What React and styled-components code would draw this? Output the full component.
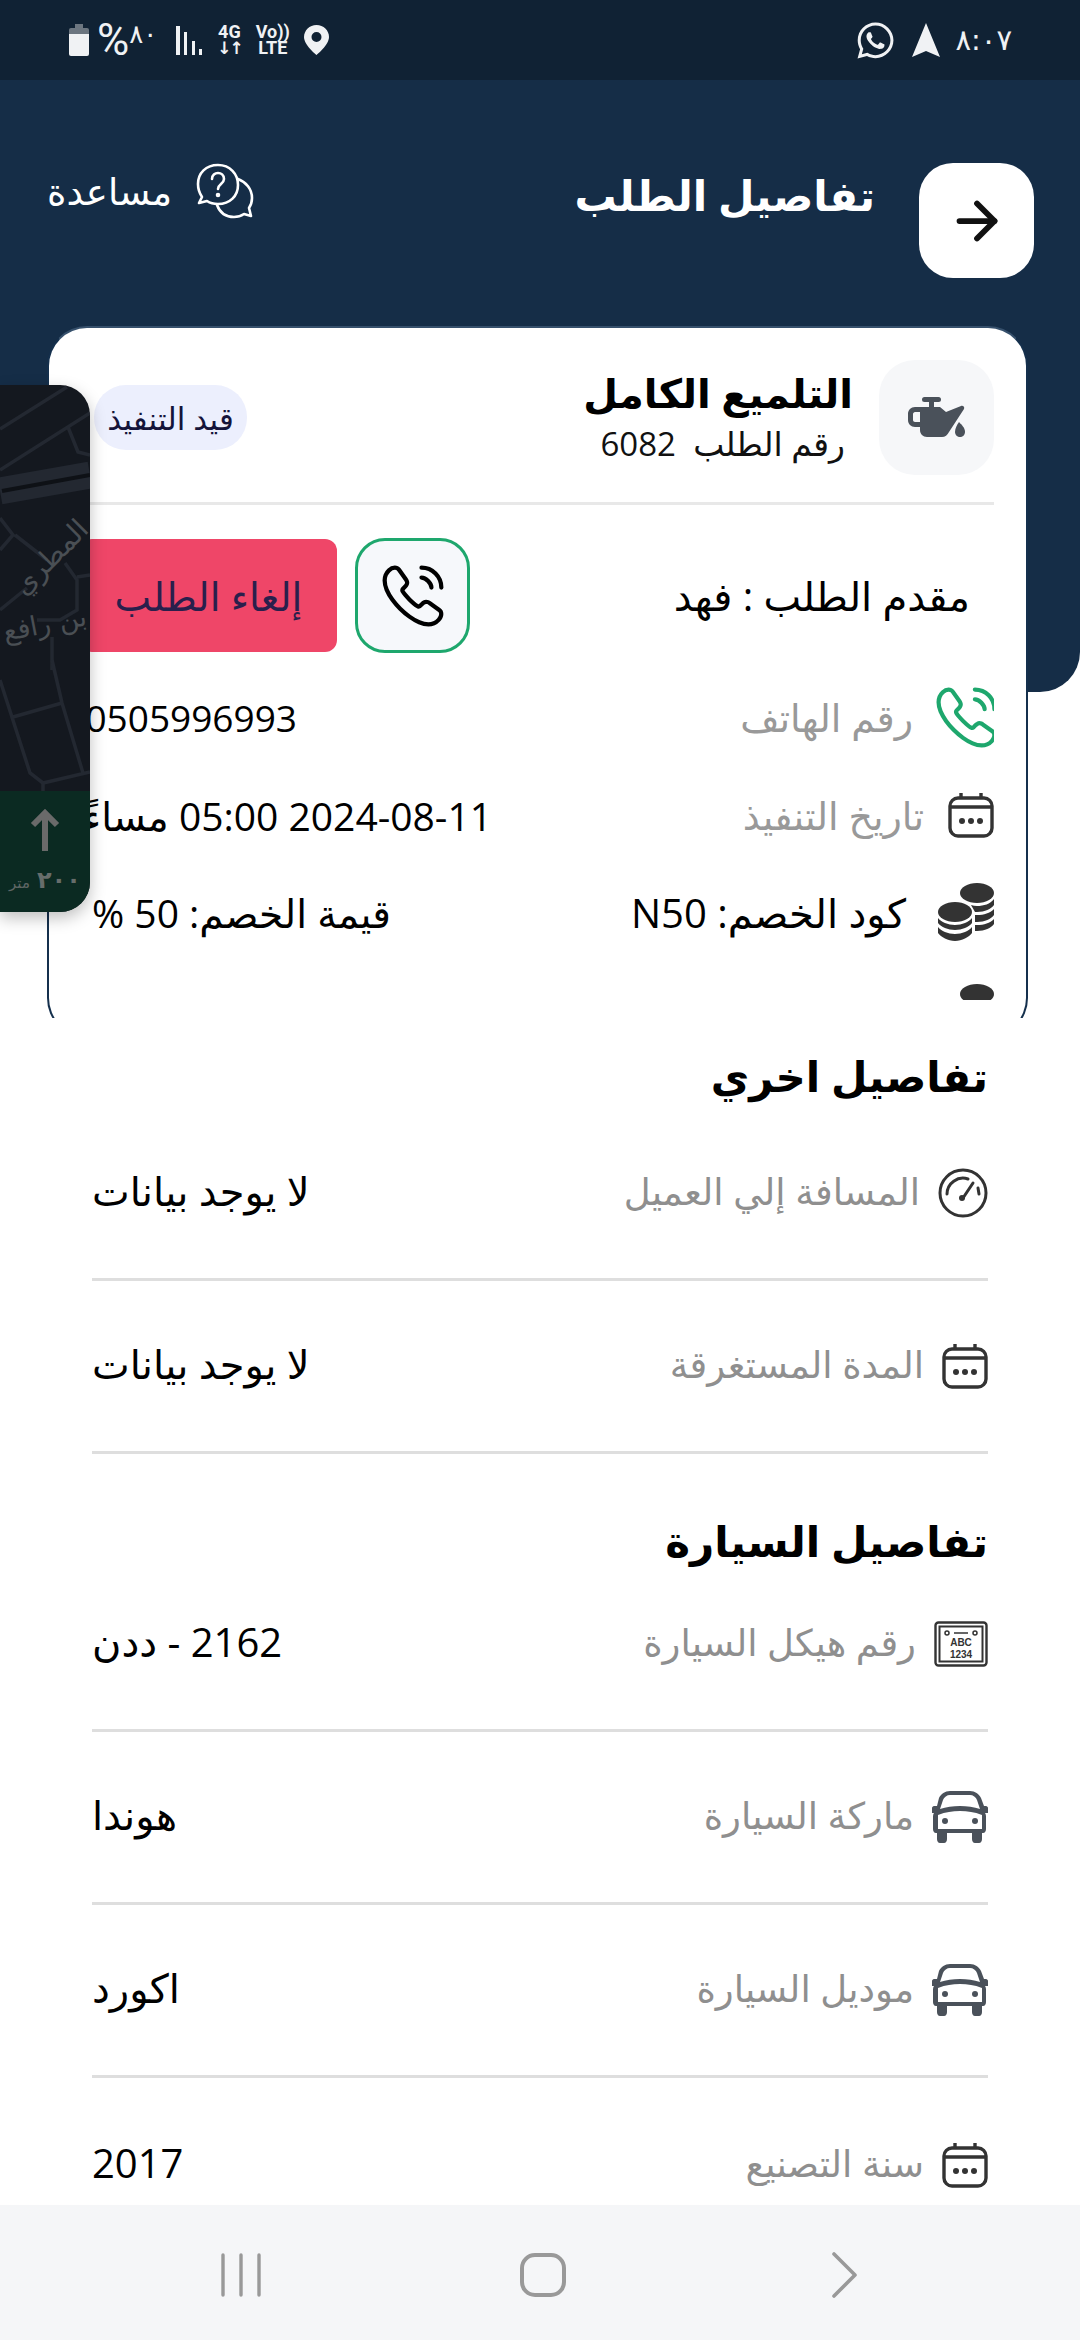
import React from 'react';
import styled, { createGlobalStyle } from 'styled-components';
import { ArrowRight } from 'lucide-react';
import { FaWhatsapp } from 'react-icons/fa';

const GlobalStyle = createGlobalStyle`
  html, body { margin: 0; padding: 0; background: #fff; }
  * { box-sizing: border-box; }
  body { font-family: "Open Sans", "DejaVu Sans", sans-serif; }
`;

const Screen = styled.div`
  position: relative;
  width: 1080px;
  height: 2340px;
  display: flex;
  flex-direction: column;
  overflow: hidden;
  background: #fff;
  direction: rtl;
`;

/* ---- status bar ---- */
const StatusBar = styled.div`
  height: 80px;
  flex: none;
  background: #102234;
  display: flex;
  align-items: center;
  justify-content: space-between;
  padding: 0 68px;
  color: #f0f2f4;
`;
const StatusGroup = styled.div`
  display: flex;
  align-items: center;
  gap: ${p => p.$gap || 14}px;
  direction: ltr;
`;
const ClockText = styled.span`
  font-family: "DejaVu Sans", sans-serif;
  font-size: 29px;
  color: #f0f2f4;
  line-height: 1;
`;
const Percent = styled.span`
  display: flex;
  align-items: flex-start;
  margin: 0 5px 0 -7px;
  font-family: "Roboto", sans-serif;
  font-size: 44px;
  line-height: 40px;
  color: #f0f2f4;
  span {
    font-family: "DejaVu Sans", sans-serif;
    font-size: 26px;
    line-height: 28px;
  }
`;
const MiniStack = styled.span`
  display: flex;
  flex-direction: column;
  align-items: center;
  font-family: "Roboto", sans-serif;
  font-size: 18px;
  font-weight: 700;
  line-height: 16px;
  color: #f0f2f4;
`;
const MiniArrows = styled.span`
  font-family: "DejaVu Sans", sans-serif;
  font-size: 17px;
  letter-spacing: -2px;
`;

/* ---- header + card ---- */
const TopArea = styled.div`
  position: relative;
  height: 938px;
  flex: none;
  overflow: hidden;
  padding: 83px 52px 0 47px;
  &::before {
    content: "";
    position: absolute;
    top: 0;
    left: 0;
    right: 0;
    height: 612px;
    background: #152d47;
    border-bottom-right-radius: 40px;
  }
`;
const HeaderRow = styled.div`
  position: relative;
  display: flex;
  align-items: flex-start;
  justify-content: space-between;
  height: 163px;
  margin-right: -6px;
`;
const TitleGroup = styled.div`
  display: flex;
  gap: 44px;
`;
const BackButton = styled.div`
  width: 115px;
  height: 115px;
  background: #fff;
  border-radius: 34px;
  display: flex;
  align-items: center;
  justify-content: center;
  color: #111;
`;
const PageTitle = styled.h1`
  margin: 9px 0 0;
  font-size: 42px;
  line-height: 46px;
  font-weight: 700;
  color: #fff;
`;
const HelpLink = styled.div`
  display: flex;
  align-items: flex-start;
  gap: 24px;
  color: #fff;
  font-size: 37px;
  line-height: 56px;
`;
const Card = styled.div`
  position: relative;
  height: 712px;
  background: #fff;
  border: 2px solid #15304d;
  border-top-color: #36506c;
  border-radius: 40px;
  padding: 32px 32px 0 32px;
`;
const CardClip = styled.div`
  height: 640px;
  overflow: hidden;
`;
const CardHead = styled.div`
  display: flex;
  align-items: center;
  height: 145px;
  padding-bottom: 27px;
  border-bottom: 3px solid #e8e8e8;
`;
const IconTile = styled.div`
  width: 115px;
  height: 115px;
  flex: none;
  border-radius: 36px;
  background: #f6f7f9;
  display: flex;
  align-items: center;
  justify-content: center;
`;
const HeadText = styled.div`
  margin-right: 26px;
  flex: 1;
`;
const ServiceName = styled.div`
  font-size: 40px;
  line-height: 44px;
  font-weight: 700;
  color: #000;
`;
const OrderNumber = styled.div`
  font-size: 33px;
  line-height: 42px;
  margin-top: 8px;
  color: #111;
  padding-right: 8px;
`;
const Badge = styled.div`
  height: 65px;
  width: 153px;
  margin-left: 13px;
  border-radius: 32px;
  background: #eceffd;
  display: flex;
  align-items: center;
  justify-content: center;
  font-size: 31px;
  color: #14143a;
  white-space: nowrap;
`;
const RequesterRow = styled.div`
  display: flex;
  align-items: center;
  height: 115px;
  margin-top: 33px;
  padding-right: 24px;
`;
const Requester = styled.div`
  flex: 1;
  font-size: 40px;
  color: #000;
`;
const CallButton = styled.div`
  width: 115px;
  height: 115px;
  border-radius: 30px;
  border: 3px solid #1ea76d;
  background: #f6f8fb;
  display: flex;
  align-items: center;
  justify-content: center;
  color: #000;
`;
const CancelButton = styled.div`
  width: 257px;
  height: 113px;
  margin: 0 18px 0 -1px;
  border-radius: 12px;
  background: #ef4668;
  display: flex;
  align-items: center;
  justify-content: center;
  font-size: 39px;
  color: #2a1f4c;
  white-space: nowrap;
`;
const InfoRow = styled.div`
  display: flex;
  align-items: center;
  height: 66px;
  margin-top: ${p => p.$top || 0}px;
`;
const InfoLabel = styled.div`
  display: flex;
  align-items: center;
  gap: ${p => p.$gap || 26}px;
  width: ${p => p.$w}px;
  flex: none;
  font-size: ${p => p.$size || 38}px;
  color: ${p => p.$dark ? '#000' : '#999'};
  white-space: nowrap;
`;
const InfoValue = styled.div`
  color: #000;
  white-space: nowrap;
  font-size: ${p => p.$size || 39}px;
`;
const CallSvg = styled.svg`
  flex: none;
  margin: ${p => p.$inset ? `0 -${p.$inset}px` : 0};
`;

/* ---- lower lists ---- */
const Details = styled.div`
  flex: 1;
  min-height: 0;
  overflow: hidden;
  padding: 29px 92px 0 92px;
`;
const SectionTitle = styled.h2`
  height: 58px;
  margin: ${p => p.$top || 0}px 0 ${p => p.$bottom || 0}px;
  font-size: 42px;
  line-height: 58px;
  font-weight: 700;
  color: #000;
`;
const Row = styled.div`
  display: flex;
  align-items: center;
  justify-content: space-between;
  height: 173px;
  border-bottom: ${p => p.$last ? 'none' : '3px solid #dedede'};
`;
const RowLabel = styled.div`
  display: flex;
  align-items: center;
  gap: 18px;
  font-size: 37px;
  color: #8f8f8f;
  span { margin-top: -5px; }
`;
const RowValue = styled.div`
  font-size: 40px;
  color: #000;
  margin-top: -5px;
`;

/* ---- map overlay ---- */
const MapCard = styled.div`
  position: absolute;
  left: 0;
  top: 385px;
  width: 90px;
  height: 527px;
  border-radius: 0 30px 30px 0;
  background: #14181f;
  overflow: hidden;
  direction: ltr;
`;
const MapShadow = styled.div`
  position: absolute;
  left: 0;
  top: 385px;
  width: 90px;
  height: 527px;
  border-radius: 0 30px 30px 0;
  box-shadow: 0 6px 16px rgba(0, 0, 0, 0.25);
`;
const MapFooter = styled.div`
  position: absolute;
  left: 0;
  right: 0;
  bottom: 0;
  height: 121px;
  background: #0b2a22;
  display: flex;
  flex-direction: column;
  align-items: center;
`;
const Distance = styled.div`
  display: flex;
  align-items: baseline;
  gap: 7px;
  direction: rtl;
  font-size: 15px;
  line-height: 30px;
  margin-top: 13px;
  color: #5f6664;
  b { font-size: 24px; color: #666d6b; }
`;

/* ---- nav bar ---- */
const NavBar = styled.div`
  position: absolute;
  left: 0;
  right: 0;
  bottom: 0;
  height: 135px;
  background: #f5f6f8;
  display: grid;
  grid-template-columns: repeat(3, 302px);
  justify-content: center;
  align-items: center;
  justify-items: center;
  direction: ltr;
  padding: 4px 0 0 6px;
`;

const CallIcon = ({ size = 60, color = '#000', inset }) => (
  <CallSvg $inset={inset} width={size} height={size} viewBox="0 0 24 24" fill="none" stroke={color} strokeWidth="1.5" strokeLinecap="round" strokeLinejoin="round">
    <path d="M21.97 18.33c0 .36-.08.73-.25 1.09-.17.36-.39.7-.68 1.02-.49.54-1.03.93-1.64 1.18-.6.25-1.25.38-1.95.38-1.02 0-2.11-.24-3.26-.73s-2.3-1.15-3.44-1.98a28.75 28.75 0 0 1-3.28-2.8 28.414 28.414 0 0 1-2.79-3.27c-.82-1.14-1.48-2.28-1.96-3.41C2.24 8.67 2 7.58 2 6.54c0-.68.12-1.33.36-1.93.24-.61.62-1.17 1.15-1.67C4.15 2.31 4.85 2 5.59 2c.28 0 .56.06.81.18.26.12.49.3.67.56l2.32 3.27c.18.25.31.48.4.7.09.21.14.42.14.61 0 .24-.07.48-.21.71-.13.23-.32.47-.56.71l-.76.79c-.11.11-.16.24-.16.4 0 .08.01.15.03.23.03.08.06.14.08.2.18.33.49.76.93 1.28.45.52.93 1.05 1.45 1.58.54.53 1.06 1.02 1.59 1.47.52.44.95.74 1.29.92.05.02.11.05.18.08.08.03.16.04.25.04.17 0 .3-.06.41-.17l.76-.75c.25-.25.49-.44.72-.56.23-.14.46-.21.71-.21.19 0 .39.04.61.13.22.09.45.22.7.39l3.31 2.35c.26.18.44.39.55.64.1.25.16.5.16.78Z" />
    <path d="M18.5 9c0-.6-.47-1.52-1.17-2.27-.64-.69-1.49-1.23-2.33-1.23M22 9c0-3.87-3.13-7-7-7" />
  </CallSvg>
);

const Calendar = ({ size = 46 }) => (
  <svg width={size} height={size} viewBox="0 0 46 46" fill="none" stroke="#333" strokeWidth="3.4">
    <rect x="2" y="6" width="42" height="38" rx="8" />
    <path d="M2 15h42M13 1v6M33 1v6" />
    <g fill="#333" stroke="none">
      <circle cx="14" cy="29" r="3" />
      <circle cx="23" cy="29" r="3" />
      <circle cx="32" cy="29" r="3" />
    </g>
  </svg>
);

const Gauge = () => (
  <svg width="50" height="50" viewBox="0 0 50 50" fill="none" stroke="#333" strokeWidth="3">
    <circle cx="25" cy="25" r="23" />
    <path d="M9 26a16 16 0 0 1 21-15" strokeLinecap="round" />
    <path d="M40 20l1 6" strokeLinecap="round" />
    <path d="M25 30l10-15" strokeLinecap="round" />
    <circle cx="24" cy="30" r="3" fill="#333" stroke="none" />
  </svg>
);

const Plate = () => (
  <svg width="54" height="46" viewBox="0 0 54 46" fill="none" stroke="#333">
    <rect x="1.500" y="1.500" width="51" height="43" rx="3" strokeWidth="2.400" />
    <rect x="5.500" y="5.500" width="43" height="35" strokeWidth="2" />
    <circle cx="13" cy="12" r="2" strokeWidth="1.500" />
    <circle cx="41" cy="12" r="2" strokeWidth="1.500" />
    <path d="M20 12h14" strokeWidth="1.500" />
    <text x="27" y="25" textAnchor="middle" fontFamily="Liberation Sans" fontSize="10" fontWeight="700" fill="#333" stroke="none">ABC</text>
    <text x="27" y="37" textAnchor="middle" fontFamily="Liberation Sans" fontSize="10" fontWeight="700" fill="#333" stroke="none">1234</text>
  </svg>
);

const Car = () => (
  <svg width="56" height="52" viewBox="0 0 56 52" fill="#4a515a">
    <path fillRule="evenodd" d="M18 0h20c5 0 9 3 11 7l3 8h2c1 0 2 1 2 2v5h-3c1 1 1 3 1 5v11c0 2-1 4-3 4h-1v6c0 2-1 4-3 4h-4c-2 0-3-2-3-4v-6H15v6c0 2-1 4-3 4H8c-2 0-3-2-3-4v-6H4c-2 0-3-2-3-4V27c0-2 0-4 1-5H0v-5c0-1 1-2 2-2h3l2-8C9 3 13 0 18 0zm0 4c-3 0-6 2-7 5l-3 9c6-2 13-3 20-3s14 1 20 3l-3-9c-1-3-4-5-7-5zM28 20c-8 0-14 1-22 4v14h44V24c-8-3-14-4-22-4z" />
    <circle cx="13" cy="30" r="3" />
    <circle cx="43" cy="30" r="3" />
  </svg>
);

const Coins = () => (
  <svg width="56" height="58" viewBox="0 0 56 58" fill="#333">
    <ellipse cx="39" cy="10" rx="17" ry="10" />
    <path d="M33 22c2 .5 4 1 6 1 7 0 13-2 17-7v6c-3 4-9 7-17 7h-2z" />
    <path d="M37 32h2c7 0 13-2 17-6v6c-3 4-9 7-17 7h-2z" />
    <path d="M37 42h2c7 0 13-2 17-6v5c-3 4-9 7-17 7h-2z" />
    <ellipse cx="17" cy="29" rx="17" ry="10" />
    <path d="M0 35c3 4 10 7 17 7s14-3 17-7v5c-3 4-10 7-17 7S3 44 0 40z" />
    <path d="M0 44c3 4 10 7 17 7s14-3 17-7v6c-3 4-10 8-17 8S3 54 0 50z" />
  </svg>
);

const OilCan = () => (
  <svg width="57" height="41" viewBox="0 0 57 41" fill="#4a515a">
    <rect x="14" y="0" width="19" height="5" rx="2.500" />
    <rect x="21" y="3" width="5" height="10" />
    <path fillRule="evenodd" d="M7 10h25l6 5 15-6c2-.7 4 1 3 3L41 35c-1.500 3-4 5-7 5H19c-4 0-7-3-7-7v-3H7c-4 0-7-3-7-7v-6c0-4 3-7 7-7zm0 5c-1 0-2 1-2 2v6c0 1 1 2 2 2h5V15z" />
    <path d="M51 25c3 3 6 6 6 10 0 3-2.500 5-5 5s-5-2-5-5c0-4 2-7 4-10z" />
  </svg>
);

const HelpIcon = () => (
  <svg width="58" height="56" viewBox="0 0 58 56" fill="none" stroke="#fff" strokeWidth="2.600" strokeLinejoin="round" strokeLinecap="round">
    <path d="M22 2C10 2 2 10 2 21c0 6 2 10 4 13l-3 6 8-2c3 2 7 3 11 3 12 0 20-8 20-19S34 2 22 2z" />
    <path d="M42 16c8 3 14 10 14 19 0 4-1 7-3 10l2 8-7-2c-3 2-6 3-10 3-8 0-14-4-17-12" />
    <path d="M16 16c0-4 3-6 6-6s6 2 6 6c0 5-6 5-6 10" />
    <circle cx="22" cy="32" r="1" fill="#fff" />
  </svg>
);

const Battery = () => (
  <svg width="22" height="32" viewBox="0 0 22 32">
    <path d="M7 0h8v4H7z" fill="#6c7680" />
    <path d="M3 4h16a2 2 0 0 1 2 2v4H1V6a2 2 0 0 1 2-2z" fill="#6c7680" />
    <path d="M1 10h20v20a2 2 0 0 1-2 2H3a2 2 0 0 1-2-2z" fill="#f0f2f4" />
  </svg>
);

const Signal = () => (
  <svg width="27" height="29" viewBox="0 0 27 29" fill="#f0f2f4">
    <rect x="0" y="0" width="4" height="29" />
    <rect x="8" y="6" width="3" height="23" />
    <rect x="16" y="15" width="3" height="14" />
    <rect x="23" y="23" width="3" height="6" />
  </svg>
);

const Pin = () => (
  <svg width="25" height="30" viewBox="0 0 25 30">
    <path fillRule="evenodd" fill="#f0f2f4" d="M12.500 0C5.500 0 0 5.500 0 12c0 8 12.500 18 12.500 18S25 20 25 12C25 5.500 19.500 0 12.500 0zm0 7a5 5 0 1 1 0 10 5 5 0 0 1 0-10z" />
  </svg>
);

const NavArrow = () => (
  <svg width="28" height="34" viewBox="0 0 28 34">
    <path d="M14 0l14 34-14-6-14 6z" fill="#f0f2f4" />
  </svg>
);

const MapArt = () => (
  <svg width="90" height="406" viewBox="0 0 90 406" fill="none">
    <g stroke="#232831" strokeWidth="3.500">
      <path d="M0 44L67 2M0 85L90 28M68 42l10 25 12 3" />
      <path d="M0 133l13 17-13 15M15 150l32 25M0 225l27-22" />
      <path d="M65 178l12 17v30l-17 10H37M77 192l13-2M52 252v33" />
      <path d="M52 275l10 43 21 70M0 295l30 93 13 10 47-11M13 332l49-14M43 398v8" />
    </g>
    <path d="M0 106L90 90" stroke="#232831" strokeWidth="27" />
    <path d="M2 106L90 90" stroke="#0e1116" strokeWidth="4" />
    <g fontFamily="DejaVu Sans" fill="#4a4f54">
      <text transform="translate(90 146) rotate(-45)" direction="rtl" fontSize="28">المطري</text>
      <text transform="translate(88 240) rotate(-11)" direction="rtl" fontSize="27">بن رافع</text>
    </g>
  </svg>
);

const rows1 = [
  { icon: <Gauge />, label: 'المسافة إلي العميل', value: 'لا يوجد بيانات' },
  { icon: <Calendar />, label: 'المدة المستغرقة', value: 'لا يوجد بيانات' },
];
const rows2 = [
  { icon: <Plate />, label: 'رقم هيكل السيارة', value: '2162 - ددن' },
  { icon: <Car />, label: 'ماركة السيارة', value: 'هوندا' },
  { icon: <Car />, label: 'موديل السيارة', value: 'اكورد' },
  { icon: <Calendar />, label: 'سنة التصنيع', value: '2017', last: true },
];

const DetailRow = ({ icon, label, value, last }) => (
  <Row $last={last}>
    <RowLabel>{icon}<span>{label}</span></RowLabel>
    <RowValue>{value}</RowValue>
  </Row>
);

const App = () => {
  return (
    <>
      <GlobalStyle />
      <Screen>
        <StatusBar>
          <StatusGroup $gap={16}>
            <FaWhatsapp size={41} />
            <NavArrow />
            <ClockText>٨:٠٧</ClockText>
          </StatusGroup>
          <StatusGroup $gap={14}>
            <Battery />
            <Percent>%<span>٨٠</span></Percent>
            <Signal />
            <MiniStack><span>4G</span><MiniArrows>↓↑</MiniArrows></MiniStack>
            <MiniStack><span>Vo))</span><span>LTE</span></MiniStack>
            <Pin />
          </StatusGroup>
        </StatusBar>

        <TopArea>
          <HeaderRow>
            <TitleGroup>
              <BackButton><ArrowRight size={60} strokeWidth={2.300} /></BackButton>
              <PageTitle>تفاصيل الطلب</PageTitle>
            </TitleGroup>
            <HelpLink><HelpIcon /><span>مساعدة</span></HelpLink>
          </HeaderRow>
          <Card>
            <CardClip>
              <CardHead>
                <IconTile><OilCan /></IconTile>
                <HeadText>
                  <ServiceName>التلميع الكامل</ServiceName>
                  <OrderNumber>رقم الطلب&nbsp; 6082</OrderNumber>
                </HeadText>
                <Badge>قيد التنفيذ</Badge>
              </CardHead>
              <RequesterRow>
                <Requester>مقدم الطلب : فهد</Requester>
                <CallButton><CallIcon size={68} /></CallButton>
                <CancelButton>إلغاء الطلب</CancelButton>
              </RequesterRow>
              <InfoRow $top={31}>
                <InfoLabel $w={697}><CallIcon size={67} color="#1ea76d" inset={6} /><span>رقم الهاتف</span></InfoLabel>
                <InfoValue $size={37}>0505996993</InfoValue>
              </InfoRow>
              <InfoRow $top={32}>
                <InfoLabel $w={502} $gap={24}><Calendar /><span>تاريخ التنفيذ</span></InfoLabel>
                <InfoValue>2024-08-11 05:00 مساءً</InfoValue>
              </InfoRow>
              <InfoRow $top={31}>
                <InfoLabel $w={603} $gap={32} $size={40} $dark><Coins /><span>كود الخصم: N50</span></InfoLabel>
                <InfoValue>قيمة الخصم: 50 %</InfoValue>
              </InfoRow>
              <InfoRow $top={35}><Coins /></InfoRow>
            </CardClip>
          </Card>
        </TopArea>

        <Details>
          <SectionTitle $bottom={3}>تفاصيل اخري</SectionTitle>
          {rows1.map(r => <DetailRow key={r.label} {...r} />)}
          <SectionTitle $top={58} $bottom={-11}>تفاصيل السيارة</SectionTitle>
          {rows2.map(r => <DetailRow key={r.label} {...r} />)}
        </Details>

        <MapShadow />
        <MapCard>
          <MapArt />
          <MapFooter>
            <svg width="30" height="42" viewBox="0 0 30 42" style={{ marginTop: 18 }} fill="none" stroke="#6a6a6a" strokeWidth="6">
              <path d="M15 42V5M3 16L15 4l12 12" />
            </svg>
            <Distance><b>٢٠٠</b><span>متر</span></Distance>
          </MapFooter>
        </MapCard>

        <NavBar>
          <svg width="42" height="44" viewBox="0 0 42 44" stroke="#999" strokeWidth="3.400" strokeLinecap="round">
            <path d="M3 2v40M21 2v40M39 2v40" />
          </svg>
          <svg width="46" height="44" viewBox="0 0 46 44" fill="none" stroke="#999" strokeWidth="4">
            <rect x="2" y="2" width="42" height="40" rx="13" />
          </svg>
          <svg width="26" height="46" viewBox="0 0 26 46" fill="none" stroke="#999" strokeWidth="3.600" strokeLinecap="round" strokeLinejoin="round">
            <path d="M2 2l21 21L2 44" />
          </svg>
        </NavBar>
      </Screen>
    </>
  );
};

export default App;
